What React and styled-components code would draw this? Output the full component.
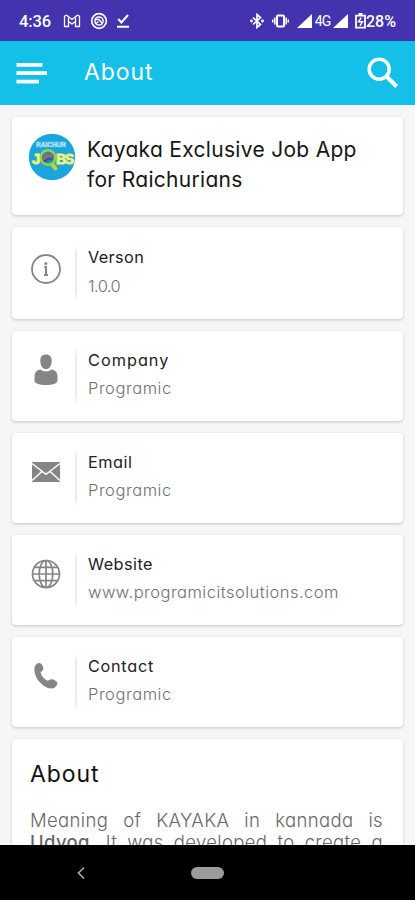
import React from "react";
import styled, { createGlobalStyle } from "styled-components";

const details = [
  { label: "Verson", value: "1.0.0", icon: "info", labelGap: 0.35, valueGap: -0.55 },
  { label: "Company", value: "Programic", icon: "person", labelGap: 1, valueGap: 0.55 },
  { label: "Email", value: "Programic", icon: "mail", labelGap: 0.5, valueGap: 0.55 },
  { label: "Website", value: "www.programicitsolutions.com", icon: "globe", labelGap: 0.45, valueGap: 0.48 },
  { label: "Contact", value: "Programic", icon: "phone", labelGap: 0.7, valueGap: 0.55 },
];

const icons = {
  info: (
    <g fill="none" stroke="#858585">
      <circle cx="16" cy="16" r="14" strokeWidth="1.8" />
      <path d="M14.300 13.900h1.700v7.900M14 22h4" strokeWidth="2" />
      <circle cx="15.800" cy="10.600" r="1.500" fill="#858585" stroke="none" />
    </g>
  ),
  person: (
    <g fill="#858585">
      <path d="M16 .5c3.800 0 5.700 2.200 5.700 6.200 0 4.600-2.200 8.300-5.700 8.300s-5.700-3.700-5.700-8.300C10.300 2.700 12.200.5 16 .5z" />
      <path d="M10.500 15.500c1.500 1.300 3.400 1.900 5.500 1.900s4-.6 5.500-1.900c4 .6 6 3 6 7.300v4c0 2.500-4.500 4.200-11.500 4.200S4.500 29.300 4.500 26.800v-4c0-4.300 2-6.700 6-7.300z" />
    </g>
  ),
  mail: (
    <g>
      <path d="M2 6h28v20H2z" fill="#858585" />
      <path d="M2 7.500l14 10.800L30 7.500M2 24.500l10-9M30 24.500l-10-9" fill="none" stroke="#fff" strokeWidth="1.500" />
    </g>
  ),
  globe: (
    <g fill="none" stroke="#858585" strokeWidth="1.700">
      <circle cx="16" cy="16" r="13.500" />
      <ellipse cx="16" cy="16" rx="6.800" ry="13.500" />
      <path d="M16 2.500v27M2.500 16h27M5 9.300h22M5 22.700h22" />
    </g>
  ),
  phone: (
    <path
      d="M6.200 4.300C8 2.800 10 2.600 11.300 4c1.600 1.800 2.200 3.600 2 5.200-.2 1.300-1.500 1.800-2.700 3.100.6 3.500 3.800 7.300 7.300 8.500 1.300-.6 2.200-1.600 3.600-1.500 2 .1 4.300 1.400 5.600 3 .9 1.200 0 2.800-1.300 4.100-2.300 2.300-5.400 2.600-9 1C10.500 24.400 6 18.800 4.700 12.200 4 8.700 4.400 5.900 6.200 4.300z"
      fill="#858585"
    />
  ),
};

function StatusBar() {
  return (
    <Status>
      <Clock>4:36</Clock>
      <StatusIcons>
        <svg width="18" height="14" viewBox="0 0 18 14" fill="none" stroke="#fff" strokeWidth="1.300">
          <path d="M1.500 12.500V2.500Q2 1 4 1.500L9 5.500l5-4q2-.5 2.500 1v10h-4V7.500L9 10 5.500 7.500v5z" strokeLinejoin="round" />
          <path d="M5.500 7.500v-4M12.500 7.500v-4" />
        </svg>
        <svg width="18" height="18" viewBox="0 0 18 18" fill="none" stroke="#fff">
          <circle cx="9" cy="9" r="7.300" strokeWidth="1.700" />
          <circle cx="9" cy="9" r="4.100" strokeWidth="1.500" />
          <path d="M5.500 7.500h3.500l3.500 4.500M6 11.500l2.500-2" strokeWidth="1.400" />
        </svg>
        <svg width="14" height="16" viewBox="0 0 14 16" fill="none" stroke="#fff" strokeWidth="2.100">
          <path d="M2.200 6l3.200 3.400L12 2M1 13.700h12" />
        </svg>
      </StatusIcons>
      <StatusRight>
        <svg width="14" height="16" viewBox="0 0 14 16" fill="none" stroke="#fff" strokeWidth="1.700">
          <path d="M3 4.500l7.500 7L7 14.500v-13l3.500 3L3 11.500" />
          <circle cx="1.500" cy="8" r=".6" />
          <circle cx="12.500" cy="8" r=".6" />
        </svg>
        <Gap $w={8} />
        <svg width="17" height="14" viewBox="0 0 17 14" fill="none" stroke="#fff">
          <rect x="5" y="1.500" width="7" height="11" rx="1" strokeWidth="2" />
          <path d="M2.800 3.500v7M14.200 3.500v7M.7 5.500v3M16.300 5.500v3" strokeWidth="1.500" />
        </svg>
        <Gap $w={8} />
        <Signal />
        <Network>4G</Network>
        <Signal />
        <Gap $w={7} />
        <svg width="11" height="16" viewBox="0 0 11 16" fill="none" stroke="#fff" strokeWidth="1.800">
          <path d="M1 2.700h9v12H1zM3.500 1h4" />
          <path d="M6.200 4.700L3.500 8.800h4L5 12.700" strokeWidth="1.500" />
        </svg>
        <Battery>28%</Battery>
      </StatusRight>
    </Status>
  );
}

function Signal() {
  return (
    <svg width="15" height="14" viewBox="0 0 15 14">
      <path d="M15 0v14H0z" fill="#fff" />
    </svg>
  );
}

function Logo() {
  return (
    <svg width="48" height="48" viewBox="0 0 48 48">
      <circle cx="24" cy="24" r="23.200" fill="#1ba4dd" />
      <LogoText x="8" y="14" textLength="30" fontSize="6.500" fill="#a8e0f5" stroke="#a8e0f5" strokeWidth=".5">RAICHUR</LogoText>
      <LogoText x="4" y="30.500" fontSize="15" fill="#fff44a" stroke="#e9f08a" strokeWidth="1">J</LogoText>
      <LogoText x="28" y="30.500" textLength="18" fontSize="14" fill="#fff44a" stroke="#e9f08a" strokeWidth="1">BS</LogoText>
      <path d="M24 31l3.500 4.500" stroke="#b6db28" strokeWidth="4" strokeLinecap="round" />
      <circle cx="20" cy="24.500" r="7.300" fill="#1a8cc4" stroke="#a6ce39" strokeWidth="2.400" />
      <path d="M15.500 26.500l4-4 2 1.500 3-3" stroke="#e3523e" strokeWidth="2" fill="none" />
      <path d="M16 28.500l4-2.500 4-.5" stroke="#364e98" strokeWidth="2" fill="none" />
    </svg>
  );
}

function App() {
  return (
    <Screen>
      <GlobalStyle />
      <StatusBar />
      <AppBar>
        <svg width="32" height="22" viewBox="0 0 32 22" stroke="#fff" strokeWidth="3.800">
          <path d="M.5 2.800h26M.5 11.100h30.500M.5 19.600h22.500" />
        </svg>
        <PageTitle>About</PageTitle>
        <svg width="34" height="34" viewBox="0 0 34 34" fill="none" stroke="#fff">
          <circle cx="13.200" cy="13.200" r="10" strokeWidth="3.500" />
          <path d="M20.500 20.500l10.200 10" strokeWidth="4.200" />
        </svg>
      </AppBar>
      <Content>
        <HeroCard>
          <Logo />
          <AppName>
            Kayaka Exclusive Job App
            <br />
            for Raichurians
          </AppName>
        </HeroCard>
        {details.map((item, i) => (
          <DetailCard key={item.label} $tall={i === 0}>
            <IconBox $tall={i === 0}>
              <svg width="32" height="32" viewBox="0 0 32 32">
                {icons[item.icon]}
              </svg>
            </IconBox>
            <Divider />
            <DetailText>
              <Label $gap={item.labelGap}>{item.label}</Label>
              <Value $gap={item.valueGap} $tall={i === 0}>
                {item.value}
              </Value>
            </DetailText>
          </DetailCard>
        ))}
        <AboutCard>
          <h2>About</h2>
          <p>
            Meaning of KAYAKA in kannada is <b>Udyog</b>. It was developed to create a
          </p>
        </AboutCard>
      </Content>
      <NavBar>
        <svg width="8" height="14" viewBox="0 0 8 14" fill="none" stroke="#aaa" strokeWidth="1.700">
          <path d="M7 1.500L1.500 7 7 12.500" />
        </svg>
        <HomePill />
        <span />
      </NavBar>
    </Screen>
  );
}

export default App;

const GlobalStyle = createGlobalStyle`
  * {
    box-sizing: border-box;
  }
  body {
    margin: 0;
    overflow: hidden;
    font-family: Inter, "Open Sans", sans-serif;
    font-feature-settings: "cv11";
  }
  svg {
    display: block;
    flex-shrink: 0;
  }
`;
const Screen = styled.div`
  width: 415px;
  height: 900px;
  display: flex;
  flex-direction: column;
  background: #f6f6f6;
  overflow: hidden;
`;
const Status = styled.div`
  height: 41px;
  flex-shrink: 0;
  display: flex;
  align-items: center;
  padding: 1px 18px 0 19px;
  background: #4433ae;
  color: white;
  font-family: Roboto, sans-serif;
`;
const Clock = styled.span`
  width: 44px;
  font-size: 16.5px;
  font-weight: 500;
  letter-spacing: -0.1px;
`;
const StatusIcons = styled.div`
  display: flex;
  align-items: center;
  gap: 8.5px;
`;
const StatusRight = styled.div`
  display: flex;
  align-items: center;
  margin-left: auto;
`;
const Gap = styled.span`
  width: ${(props) => props.$w}px;
`;
const Network = styled.span`
  width: 21px;
  font-size: 14px;
  text-align: center;
  letter-spacing: -1px;
`;
const Battery = styled.span`
  width: 31px;
  font-size: 16px;
  font-weight: 500;
  white-space: nowrap;
`;
const AppBar = styled.div`
  height: 64px;
  flex-shrink: 0;
  display: flex;
  align-items: center;
  padding: 0 15px 0 16px;
  background: #14c0e7;
`;
const PageTitle = styled.div`
  flex: 1;
  margin: -3px 0 0 36px;
  color: white;
  font-size: 23px;
  letter-spacing: 0.9px;
`;
const Content = styled.div`
  flex: 1;
  min-height: 0;
  overflow: hidden;
  display: flex;
  flex-direction: column;
  gap: 12px;
  padding: 12px 12px 0;
`;
const Card = styled.div`
  flex-shrink: 0;
  display: flex;
  background: white;
  border-radius: 4px;
  box-shadow: 0 1px 3px rgba(0, 0, 0, 0.2);
`;
const HeroCard = styled(Card)`
  height: 98px;
  padding: 16px 0 0 16px;
`;
const AppName = styled.div`
  margin: 2px 0 0 11px;
  color: #161616;
  font-size: 21px;
  line-height: 29.5px;
  letter-spacing: 0.3px;
  white-space: nowrap;
`;
const LogoText = styled.text`
  font-family: "Liberation Sans", sans-serif;
  font-weight: bold;
`;
const DetailCard = styled(Card)`
  height: ${(props) => (props.$tall ? 92 : 90)}px;
  padding: ${(props) => (props.$tall ? 19 : 18)}px 0 0 18px;
`;
const IconBox = styled.div`
  width: 45px;
  padding-top: ${(props) => (props.$tall ? 6.5 : 5)}px;
`;
const Divider = styled.div`
  width: 2px;
  height: 54px;
  background: linear-gradient(#f8f8f8, #ebebeb 15%, #ebebeb 85%, #f8f8f8);
`;
const DetailText = styled.div`
  padding-left: 11px;
`;
const Label = styled.div`
  color: #222;
  font-size: 16.3px;
  line-height: 22px;
  letter-spacing: ${(props) => props.$gap}px;
`;
const Value = styled.div`
  margin-top: ${(props) => (props.$tall ? 7 : 6)}px;
  color: #707070;
  font-size: 16.5px;
  font-weight: 300;
  line-height: 22px;
  letter-spacing: ${(props) => props.$gap}px;
`;
const AboutCard = styled(Card)`
  height: 180px;
  flex-direction: column;
  padding: 20px 20px 0 18px;
  h2 {
    margin: 0;
    color: #111;
    font-size: 23px;
    font-weight: 400;
    line-height: 30px;
    letter-spacing: 0.9px;
  }
  p {
    margin: 21px 0 0;
    color: #686868;
    font-size: 18.5px;
    font-weight: 300;
    line-height: 21.5px;
    letter-spacing: 0.35px;
    text-align: justify;
    text-align-last: justify;
  }
  b {
    font-weight: 500;
  }
`;
const NavBar = styled.div`
  height: 55px;
  flex-shrink: 0;
  display: grid;
  grid-template-columns: 1fr 33px 1fr;
  align-items: center;
  background: black;
  > svg {
    margin-left: 77px;
  }
`;
const HomePill = styled.div`
  height: 12px;
  border-radius: 6px;
  background: #9b9b9b;
`;
